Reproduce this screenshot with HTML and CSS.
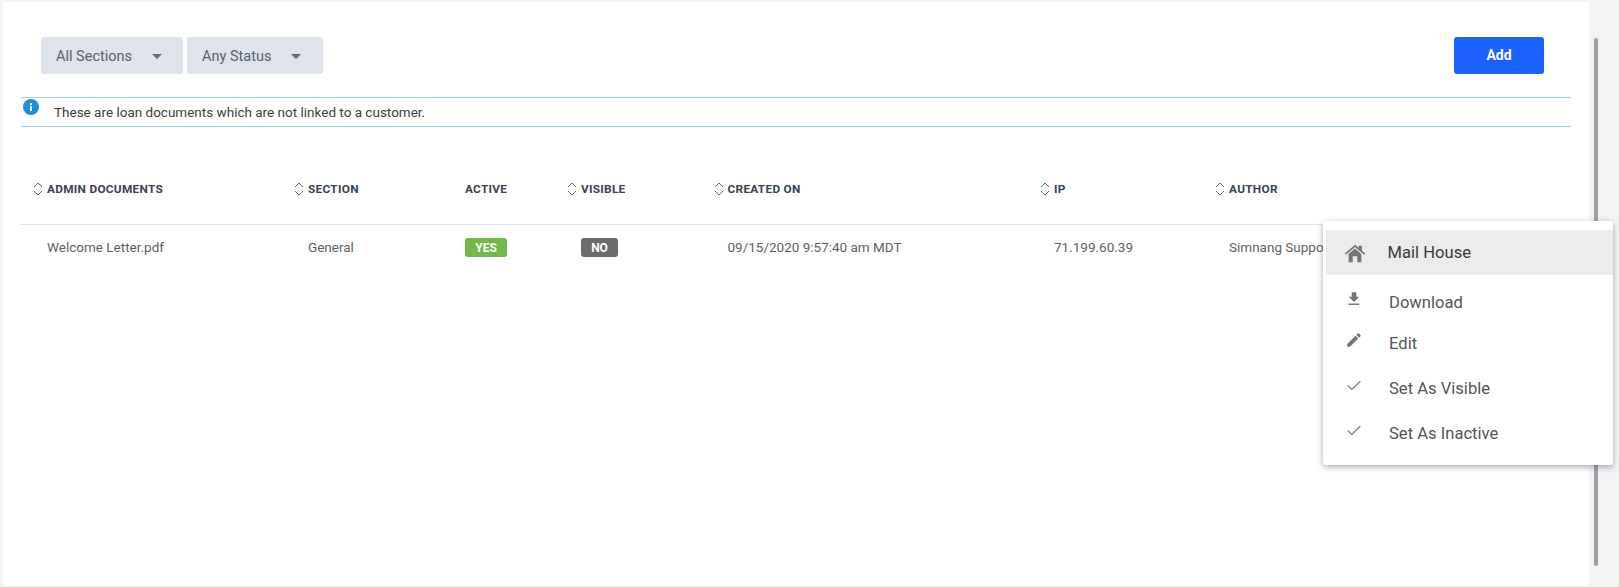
FILE: index.html
```html
<!DOCTYPE html>
<html lang="en">
<head>
<meta charset="utf-8">
<title>Admin Documents</title>
<link rel="stylesheet" href="styles.css">
</head>
<body>
<svg class="defs" width="0" height="0" aria-hidden="true">
  <symbol id="sort" viewBox="0 0 10 14"><path d="M1 5 L5 1 L9 5 M1 9 L5 13 L9 9" fill="none" stroke="#666" stroke-width="1"/></symbol>
  <symbol id="check" viewBox="0 0 24 24"><path d="M3.5 12.5 L9 18 L20.5 7" fill="none" stroke="#777" stroke-width="1.5"/></symbol>
</svg>
<main class="panel">
  <div class="toolbar">
    <div class="filters">
      <button class="filter filter-section"><span class="filter-label">All Sections</span><span class="caret"></span></button>
      <button class="filter filter-status"><span class="filter-label">Any Status</span><span class="caret"></span></button>
    </div>
    <button class="add">Add</button>
  </div>
  <div class="notice">
    <svg class="info" viewBox="0 0 16 16"><circle cx="8" cy="8" r="8" fill="#1f8ed6"/><rect x="7" y="7" width="2" height="5" fill="#fff"/><rect x="7" y="4" width="2" height="2" fill="#fff"/></svg>
    <span>These are loan documents which are not linked to a customer.</span>
  </div>
  <div class="table">
    <div class="row head">
      <div class="cell"><svg class="sort"><use href="#sort"/></svg>Admin Documents</div>
      <div class="cell"><svg class="sort"><use href="#sort"/></svg>Section</div>
      <div class="cell">Active</div>
      <div class="cell"><svg class="sort"><use href="#sort"/></svg>Visible</div>
      <div class="cell"><svg class="sort"><use href="#sort"/></svg>Created On</div>
      <div class="cell"><svg class="sort"><use href="#sort"/></svg>IP</div>
      <div class="cell"><svg class="sort"><use href="#sort"/></svg>Author</div>
    </div>
    <div class="row body">
      <div class="cell">Welcome Letter.pdf</div>
      <div class="cell">General</div>
      <div class="cell flush"><span class="badge yes">YES</span></div>
      <div class="cell"><span class="badge no">NO</span></div>
      <div class="cell">09/15/2020 9:57:40 am MDT</div>
      <div class="cell">71.199.60.39</div>
      <div class="cell">Simnang Support</div>
    </div>
  </div>
</main>
<div class="scrollbar"></div>
<ul class="menu">
  <li class="item active">
    <svg class="icon home" viewBox="0 0 24 24"><path fill="#757575" d="M5 13 L12 7 L19 13 V22 H14.5 V15.5 H9.5 V22 H5 Z M0.8 12.6 L12 3 L16 6.4 V4 H19.5 V9.4 L23.2 12.6 L22 14 L12 5.4 L2 14 Z"/></svg>
    <span>Mail House</span>
  </li>
  <li class="item download">
    <svg class="icon" viewBox="0 0 24 24"><path fill="#757575" d="M19 9h-4V3H9v6H5l7 7 7-7zM5 18v2h14v-2H5z"/></svg>
    <span>Download</span>
  </li>
  <li class="item edit">
    <svg class="icon" viewBox="0 0 24 24"><path fill="#757575" d="M3 17.25V21h3.75L17.81 9.94l-3.75-3.75L3 17.25zM20.71 7.04a1 1 0 0 0 0-1.41l-2.34-2.34a1 1 0 0 0-1.41 0l-1.83 1.83 3.75 3.75 1.83-1.83z"/></svg>
    <span>Edit</span>
  </li>
  <li class="item toggle">
    <svg class="icon"><use href="#check"/></svg>
    <span>Set As Visible</span>
  </li>
  <li class="item toggle">
    <svg class="icon"><use href="#check"/></svg>
    <span>Set As Inactive</span>
  </li>
</ul>
</body>
</html>
```

FILE: styles.css
```css
* { box-sizing: border-box; }
html, body { height: 100%; }
body {
  margin: 0;
  background: #f2f3f5;
  font-family: Roboto, "Liberation Sans", sans-serif;
  display: flex;
  overflow: hidden;
  position: relative;
}
.defs { position: absolute; }
.panel {
  width: 1586px;
  height: 584px;
  margin: 2px 0 0 3px;
  background: #fff;
  flex: none;
}
.toolbar {
  display: flex;
  justify-content: space-between;
  padding: 35px 45px 0 38px;
}
.filters { display: flex; gap: 4px; }
.filter {
  height: 37px;
  border: 0;
  border-radius: 3px;
  background: #dfe3eb;
  color: #56606f;
  font: 400 14.5px Roboto, sans-serif;
  display: flex;
  align-items: center;
  padding: 0 0 0 15px;
}
.filter-label { padding-top: 2px; }
.filter-section { width: 142px; }
.filter-status { width: 136px; }
.caret {
  width: 0;
  height: 0;
  margin: 1px 0 0 19.5px;
  border-left: 5.5px solid transparent;
  border-right: 5.5px solid transparent;
  border-top: 5px solid #636c7a;
}
.add {
  width: 90px;
  height: 37px;
  border: 0;
  border-radius: 3px;
  background: #1c62ff;
  color: #fff;
  font: 700 14px Roboto, sans-serif;
  padding: 0 0 2px;
}
.notice {
  height: 30px;
  margin: 23px 18px 0 17.5px;
  border-top: 1px solid #a3d3e8;
  border-bottom: 1px solid #a3d3e8;
  display: flex;
  align-items: center;
  position: relative;
  padding-left: 33.5px;
  color: #3d3d3d;
  font-size: 13.5px;
}
.info {
  position: absolute;
  left: 2px;
  top: 1px;
  width: 16px;
  height: 16px;
}
.table { margin: 0 18px 0 17.5px; }
.row {
  display: grid;
  grid-template-columns: 261px 171px 102px 146.5px 326.5px 175px 1fr;
  padding-left: 12.5px;
}
.head {
  height: 98px;
  padding-top: 54px;
  border-bottom: 1px solid #dde1e6;
  color: #39424f;
  font-size: 11.8px;
  font-weight: 700;
  letter-spacing: 0.3px;
  text-transform: uppercase;
}
.head .cell {
  display: flex;
  align-items: center;
  height: 16px;
}
.sort { width: 10px; height: 14px; margin-right: 4px; flex: none; }
.body {
  height: 44px;
  align-items: center;
  color: #5f5f5f;
  font-size: 13.5px;
}
.body .cell { padding-left: 14px; white-space: nowrap; }
.body .flush { padding-left: 0; }
.badge {
  display: inline-block;
  height: 19px;
  line-height: 20px;
  border-radius: 3px;
  color: #fff;
  font-size: 12px;
  font-weight: 700;
  text-align: center;
}
.yes { width: 42px; background: #72b84a; }
.no { width: 37px; background: #6b6b6b; }
.scrollbar {
  width: 4px;
  height: 528px;
  margin: 38px 0 0 5px;
  background: #a0a0a0;
  border-radius: 2px;
  flex: none;
}
.menu {
  position: absolute;
  left: 1322.5px;
  top: 221px;
  width: 290px;
  height: 244px;
  margin: 0;
  padding: 9px 0 0 3px;
  list-style: none;
  background: #fff;
  border-radius: 3px;
  box-shadow: 0 2px 6px rgba(60, 70, 90, 0.45);
  color: #555;
  font-size: 16.6px;
}
.item {
  display: flex;
  align-items: center;
  height: 45px;
  padding-left: 19px;
}
.active { background: #ececec; color: #3a3a3a; }
.icon { width: 18px; height: 18px; margin-right: 26.5px; flex: none; }
.home { width: 22px; height: 22px; margin: 0 21.5px 0 -0.5px; }
.download { height: 44px; margin-top: 5px; }
.download .icon, .edit .icon { margin-bottom: 6px; }
.edit { height: 38px; margin-bottom: 4px; }
.toggle .icon { margin-bottom: 7px; }
```
